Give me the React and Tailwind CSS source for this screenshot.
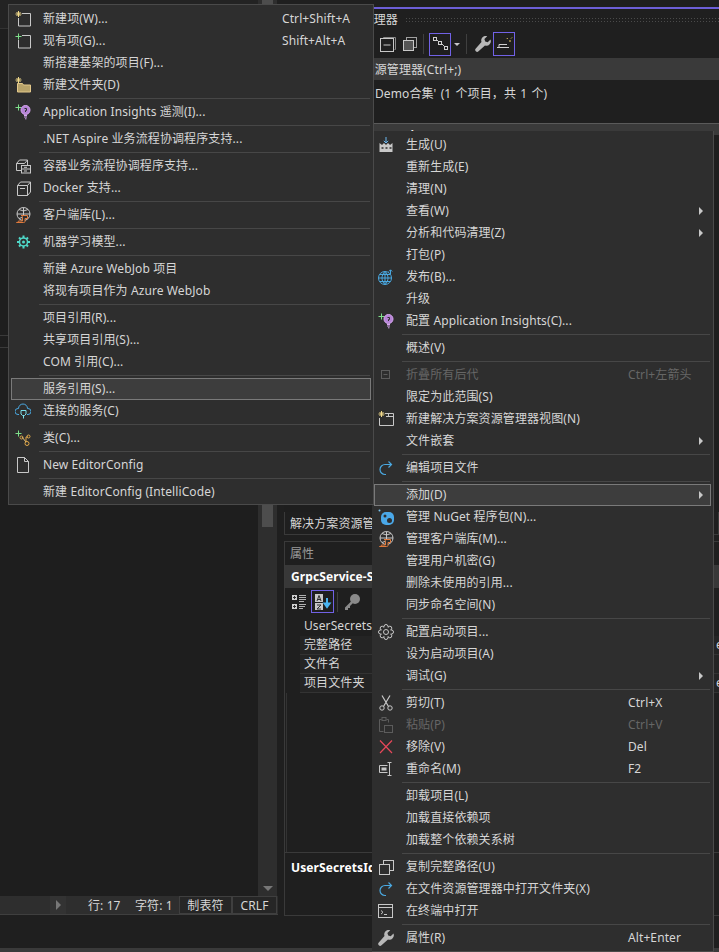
import React from "react";

const G = "#c8c8c8";
const S = ({ children }) => (
  <svg width="16" height="16" viewBox="0 0 16 16" fill="none" strokeWidth="1" className="block shrink-0">{children}</svg>
);
const Star = ({ x = 3, y = 3 }) => (
  <g stroke="#f0d98a" strokeWidth="1">
    <path d={`M${x} ${y - 3}v6M${x - 3} ${y}h6M${x - 2} ${y - 2}l4 4M${x + 2} ${y - 2}l-4 4`} />
  </g>
);
const Plus = ({ x = 3, y = 3, c = "#7ee08a" }) => <path d={`M${x} ${y - 3}v6M${x - 3} ${y}h6`} stroke={c} />;

const icons = {
  newItem: <S><path d="M7 2.500h8.500v12.500H3.500V7" stroke={G} /><Star x={3.5} y={3} /></S>,
  addItem: <S><path d="M7 2.500h8.500v12.500H3.500V7" stroke={G} /><Plus x={3.5} y={3.5} /></S>,
  folder: <S><path d="M2.500 6.500h5l1 1.500h7v7h-13z" fill="#b8a36a" stroke="#e3c88a" /><Star x={3.5} y={3} /></S>,
  insights: <S><Plus x={3.5} y={3.500} /><circle cx="10.500" cy="6" r="4.500" fill="#b583d6" stroke="#d7a6f0" /><path d="M9 11.500h3M9 13h3M10 14.800h1.500" stroke="#d7a6f0" /><path d="M9.500 4.500h2v2h-1v1.500" stroke="#2e2e2e" /></S>,
  container: <S><path d="M1.500 5.500l3-3.500h8l-3 3.500zM1.500 5.500v7h8M12.500 2v5" stroke={G} /><rect x="6.500" y="7.500" width="9" height="7.500" fill="#2e2e2e" stroke={G} /><path d="M6.500 11h9M9 9.300h3M9 13h3" stroke={G} /></S>,
  docker: <S><path d="M2.500 5.500l3-3.500h10v10l-3 3.500h-10zM2.500 5.500h10v10M12.500 5.500l3-3.500M5 8.500h5" stroke={G} /></S>,
  client: <S><circle cx="8.500" cy="7" r="6.500" stroke={G} /><path d="M2 7h13M8.500 .5v13M4 2.500q4.500 3 9 0M4 11.500q4.500-3 9 0" stroke={G} /><path d="M6 8.500h6.500v3H10v3c0 1-1 1-1.500 1H1.500c1 0 2-.5 2-1.500h4v-3.500c0-1-.5-2-1.500-2z" fill="#2e2e2e" stroke="#e07a3c" /></S>,
  ml: <S><g stroke="#4fd8c8" strokeWidth="2"><path d="M8.500 1.500v13M2 8h13M4 3.500l9 9M13 3.500l-9 9" /></g><circle cx="8.500" cy="8" r="4" fill="#2e2e2e" stroke="#4fd8c8" strokeWidth="1.500" /><circle cx="8.500" cy="8" r="1.500" fill="#4fd8c8" /></S>,
  cloud: <S><path d="M4 11.500H3a2.500 2.500 0 010-6h.5a4.500 4.500 0 019 0h.500a2.500 2.500 0 010 6h-1" stroke="#4aa8e0" /><path d="M6 7.500h5v3.500l-1.500 1.500h-2l-1.500-1.500zM8.500 12.500v3" stroke="#7de0ea" /></S>,
  klass: <S><Plus x={3.5} y={3.5} /><path d="M7 7l4 5" stroke="#e0c080" /><circle cx="6.500" cy="7.500" r="1.500" stroke="#e0a84a" /><circle cx="13.500" cy="6.500" r="1.500" stroke="#e0a84a" /><circle cx="12" cy="13.500" r="2" stroke="#e0a84a" /><path d="M11 12v-5h2" stroke="#e0a84a" /></S>,
  file: <S><path d="M2.500 .5h7l4 4v11h-11zM9.500 .5v4h4" stroke={G} /></S>,
  build: <S><path d="M8 0v6M5.800 3.800L8 6l2.200-2.200" stroke="#6ab8f0" /><path d="M1.500 6l2.500 2 2-2 2 2 2-2 2 2 2.500-2v9h-13z" fill="#c8c8c8" /><path d="M3.500 11h2M7.500 11h2M11.500 11h2" stroke="#2e2e2e" strokeWidth="1.500" /></S>,
  publish: <S><circle cx="7" cy="9" r="6.500" stroke="#4aa8e0" /><path d="M.5 9h13M7 2.500v13M1.800 5.500h10.400M1.800 12.500h10.400M7 2.500c-4 3.500-4 9.500 0 13M7 2.500c4 3.500 4 9.500 0 13" stroke="#4aa8e0" /><path d="M12.500 5V1M10.800 2.500l1.700-1.700 1.700 1.700" stroke="#4aa8e0" /></S>,
  view: <S><path d="M7 2.500h8.500v12H1.500V7M8 5.500h7.500M10.500 2.500v3" stroke={G} /><Star x={3.5} y={3} /></S>,
  redo: <S><path d="M13.500 4.500H7a5 5 0 000 10h1M10.500 1.500l3 3-3 3" stroke="#4aa8e0" strokeWidth="1.200" /></S>,
  nuget: <S><circle cx="1.500" cy="1.500" r="1" fill="#7cc4f0" /><rect x="3" y="3" width="13" height="13" rx="5" fill="#4aa8e8" /><circle cx="7" cy="7" r="1.500" fill="#2e2e2e" /><circle cx="11.500" cy="11.500" r="2.500" fill="#2e2e2e" /></S>,
  gear: <S><g stroke={G}><circle cx="8" cy="2.500" r="2" /><circle cx="8" cy="13.500" r="2" /><circle cx="2.500" cy="8" r="2" /><circle cx="13.500" cy="8" r="2" /><circle cx="4.200" cy="4.200" r="2" /><circle cx="11.800" cy="4.200" r="2" /><circle cx="4.200" cy="11.800" r="2" /><circle cx="11.800" cy="11.800" r="2" /></g><circle cx="8" cy="8" r="5" fill="#2e2e2e" /><circle cx="8" cy="8" r="2.500" stroke={G} /></S>,
  cut: <S><path d="M4 .5l6.500 11M12 .5L5.500 11.500" stroke={G} strokeWidth="1.200" /><circle cx="4" cy="13" r="2.200" stroke={G} /><circle cx="12" cy="13" r="2.200" stroke={G} /></S>,
  paste: <S><path d="M5.500 14.500h-4v-12h2M8.500 2.500h2v3" stroke="#5c5c5c" /><rect x="4" y=".5" width="4" height="3" stroke="#5c5c5c" /><rect x="6.500" y="8.500" width="8" height="7" stroke="#5c5c5c" /></S>,
  del: <S><path d="M2 1.500l12 12.500M14 1.500L2 14" stroke="#e8485a" strokeWidth="1.200" /></S>,
  rename: <S><path d="M9.500 4.500h-8v7h8" stroke={G} /><rect x="3.500" y="6.500" width="5" height="3" fill={G} /><path d="M11.500 2v12M9.500 1.500h4M9.500 14.500h4" stroke={G} /></S>,
  copy: <S><rect x="5.500" y="1.500" width="10" height="10" stroke={G} /><rect x="1.500" y="5.500" width="10" height="10" fill="#2e2e2e" stroke={G} /></S>,
  term: <S><rect x=".5" y="1.500" width="14" height="13" stroke={G} /><path d="M.5 4.500h14" stroke={G} /><path d="M3 7.500l2 1.800-2 1.800M6 11.500h3" stroke={G} /></S>,
  wrench: <S><path d="M15.500 3.500l-2.800 2.800-2.500-.8-.8-2.500L12.200.2A4.500 4.500 0 006.500 6L.8 12.500a1.800 1.800 0 002.700 2.700L10 9.500a4.500 4.500 0 005.500-6z" fill="#b8b8b8" /></S>,
  collapseSm: <S><rect x="3.500" y="3.500" width="8" height="8" stroke="#5c5c5c" /><path d="M5.500 7.500h4" stroke="#5c5c5c" /></S>,
};

const leftItems = [
  { t: "新建项(W)...", s: "Ctrl+Shift+A", i: "newItem" },
  { t: "现有项(G)...", s: "Shift+Alt+A", i: "addItem" },
  { t: "新搭建基架的项目(F)..." },
  { t: "新建文件夹(D)", i: "folder" },
  0,
  { t: "Application Insights 遥测(I)...", i: "insights" },
  0,
  { t: ".NET Aspire 业务流程协调程序支持..." },
  0,
  { t: "容器业务流程协调程序支持...", i: "container" },
  { t: "Docker 支持...", i: "docker" },
  0,
  { t: "客户端库(L)...", i: "client" },
  0,
  { t: "机器学习模型...", i: "ml" },
  0,
  { t: "新建 Azure WebJob 项目" },
  { t: "将现有项目作为 Azure WebJob" },
  0,
  { t: "项目引用(R)..." },
  { t: "共享项目引用(S)..." },
  { t: "COM 引用(C)..." },
  0,
  { t: "服务引用(S)...", hi: true },
  { t: "连接的服务(C)", i: "cloud" },
  0,
  { t: "类(C)...", i: "klass" },
  0,
  { t: "New EditorConfig", i: "file" },
  0,
  { t: "新建 EditorConfig (IntelliCode)" },
];

const rightItems = [
  { t: "生成(U)", i: "build" },
  { t: "重新生成(E)" },
  { t: "清理(N)" },
  { t: "查看(W)", a: 1 },
  { t: "分析和代码清理(Z)", a: 1 },
  { t: "打包(P)" },
  { t: "发布(B)...", i: "publish" },
  { t: "升级" },
  { t: "配置 Application Insights(C)...", i: "insights" },
  0,
  { t: "概述(V)" },
  0,
  { t: "折叠所有后代", s: "Ctrl+左箭头", d: 1, i: "collapseSm" },
  { t: "限定为此范围(S)" },
  { t: "新建解决方案资源管理器视图(N)", i: "view" },
  { t: "文件嵌套", a: 1 },
  0,
  { t: "编辑项目文件", i: "redo" },
  0,
  { t: "添加(D)", a: 1, hi: true },
  { t: "管理 NuGet 程序包(N)...", i: "nuget" },
  { t: "管理客户端库(M)...", i: "client" },
  { t: "管理用户机密(G)" },
  { t: "删除未使用的引用..." },
  { t: "同步命名空间(N)" },
  0,
  { t: "配置启动项目...", i: "gear" },
  { t: "设为启动项目(A)" },
  { t: "调试(G)", a: 1 },
  0,
  { t: "剪切(T)", s: "Ctrl+X", i: "cut" },
  { t: "粘贴(P)", s: "Ctrl+V", d: 1, i: "paste" },
  { t: "移除(V)", s: "Del", i: "del" },
  { t: "重命名(M)", s: "F2", i: "rename" },
  0,
  { t: "卸载项目(L)" },
  { t: "加载直接依赖项" },
  { t: "加载整个依赖关系树" },
  0,
  { t: "复制完整路径(U)", i: "copy" },
  { t: "在文件资源管理器中打开文件夹(X)", i: "redo" },
  { t: "在终端中打开", i: "term" },
  0,
  { t: "属性(R)", s: "Alt+Enter", i: "wrench" },
];

function Menu({ items, labelClass, outer }) {
  return (
    <div className={outer}>
      {items.map((it, k) =>
        it === 0 ? (
          <div key={k} className="h-[5px] flex items-center ml-[28px] mr-[1px]">
            <div className="h-px w-full bg-[#474747]" />
          </div>
        ) : (
          <div
            key={k}
            className={
              "h-[22px] flex items-center pl-[4px] pr-[7px] whitespace-nowrap border " +
              (it.hi ? "bg-[#3d3d3d] border-[#7a7a7a]" : "border-transparent") +
              (it.d ? " text-[#666666]" : " text-[#d6d6d6]")
            }
          >
            <span className="w-[15px] h-[16px] -ml-px mr-[13px] shrink-0">{it.i ? icons[it.i] : null}</span>
            <span className={labelClass}>{it.t}</span>
            {it.s ? <span>{it.s}</span> : null}
            {it.a ? (
              <span className="ml-auto w-0 h-0 border-y-[4px] border-y-transparent border-l-[4px] border-l-[#c8c8c8]" />
            ) : null}
          </div>
        )
      )}
    </div>
  );
}

function EditorAndStatus() {
  return (
    <div className="w-[278px] shrink-0 flex flex-col h-full">
      <div className="flex-1 flex min-h-0">
        <div className="w-[258px] bg-[#1e1e1e] flex flex-col">
          <div className="h-[29px] bg-[#232323] border-b border-[#333333]" />
          <div className="h-[306px]" />
          <div className="h-[13px] border-y border-[#3a3a3a]" />
        </div>
        <div className="w-[19px] bg-[#2e2e2e] flex flex-col items-center">
          <div className="h-[527px] w-[11px] bg-[#4d4d4d]" />
          <div className="flex-1" />
          <div className="mb-[5px] w-0 h-0 border-x-[5px] border-x-transparent border-t-[5px] border-t-[#777777]" />
        </div>
      </div>
      <div className="h-[19px] bg-[#2e2e2e] border-b border-[#3f3f3f] flex items-center text-[12px] text-[#d6d6d6] whitespace-nowrap w-[278px]">
        <div className="w-[50px]" />
        <div className="w-[16px] h-full bg-[#333333] flex items-center justify-center">
          <span className="w-0 h-0 border-y-[5px] border-y-transparent border-l-[5px] border-l-[#777777]" />
        </div>
        <span className="ml-[22px] w-[47px] pt-[1px]">行: 17</span>
        <span className="w-[44px] pt-[1px]">字符: 1</span>
        <span className="h-full w-[53px] border border-[#3f3f3f] bg-[#262626] flex items-center justify-center pt-[1px]">制表符</span>
        <span className="h-full w-[45px] border border-[#3f3f3f] bg-[#262626] flex items-center justify-center pt-[1px]">CRLF</span>
      </div>
      <div className="h-[33px]" />
    </div>
  );
}

function Properties() {
  const rows = [
    ["完整路径", "e"],
    ["文件名", ""],
    ["项目文件夹", "e"],
  ];
  return (
    <div className="h-[375px] w-[445px] border border-[#3a3a3a] flex flex-col text-[12px] text-[#d6d6d6] whitespace-nowrap">
      <div className="h-[23px] flex items-center pl-[5px] text-[#9a9a9a]">属性</div>
      <div className="h-[23px] bg-[#383838] flex items-center pl-[6px] font-bold text-white">GrpcService-SDemo</div>
      <div className="h-[27px] flex items-center pl-[7px]">
        <svg width="14" height="14" viewBox="0 0 14 14" className="block">
          <rect x="0" y="0" width="5" height="5" fill="#d0d0d0" />
          <rect x="0" y="9" width="5" height="5" fill="#d0d0d0" />
          <path d="M1 2.500h3M2.500 1v3M1 11.500h3M2.500 10v3" stroke="#2e2e2e" />
          <path d="M7 .5h7M7 2.500h7M7 4.500h7M7 6.500h5M7 9.500h7M7 11.500h6M7 13.500h4" stroke="#b0b0b0" />
        </svg>
        <span className="ml-[5px] w-[23px] h-[23px] border border-[#7162e6] flex items-center justify-center">
          <svg width="18" height="18" viewBox="0 0 18 18" className="block">
            <rect x="1" y="1" width="8" height="8" fill="#c8c8c8" />
            <rect x="1" y="10" width="8" height="7" fill="#c8c8c8" />
            <path d="M3 8l2-5.500L7 8M3.500 6.500h3M3 12h4l-4 4h4" stroke="#2e2e2e" fill="none" />
            <path d="M13 5v9M10.500 10.500l2.500 3.500 2.500-3.500z" stroke="#4ab4f0" strokeWidth="2" fill="#4ab4f0" />
          </svg>
        </span>
        <span className="ml-[3px] w-px h-[20px] bg-[#3f3f3f]" />
        <svg width="18" height="18" viewBox="0 0 18 18" className="block ml-[5px]">
          <circle cx="12" cy="6" r="5" fill="#8a8a8a" />
          <path d="M8.500 8L2 14.500V17h3v-2h2v-2l3-3z" fill="#8a8a8a" />
        </svg>
      </div>
      <div className="h-[21px] flex items-center pl-[19px] pt-[1px] text-[#d6d6d6]">
        <span>UserSecrets</span>
      </div>
      {rows.map((r) => (
        <div key={r[0]} className="h-[19px] ml-[15px] pl-[4px] bg-[#242424] border-b border-[#333333] flex items-center">
          <span className="w-[412px]">{r[0]}</span>
          <span>{r[1]}</span>
        </div>
      ))}
      <div className="flex-1 border-l border-[#333333] ml-px" />
      <div className="h-[63px] border-t border-[#3a3a3a] pl-[6px] pt-[6px] font-bold text-white">UserSecretsId</div>
    </div>
  );
}

function RightColumn() {
  return (
    <div className="flex-1 flex flex-col h-full pl-[6px] pt-[7px] text-[12px] text-[#d6d6d6] whitespace-nowrap min-w-0">
      <div className="h-[2px] bg-[#6d5fd8] -ml-[6px] shrink-0" />
      <div className="h-[21px] flex items-center pl-[5px] shrink-0">
        <span>解决方案资源管理器</span>
        <div className="ml-[7px] flex-1 h-[6px] bg-[radial-gradient(#4a4a4a_1px,transparent_1px)] bg-[length:3px_3px]" />
      </div>
      <div className="h-[28px] flex items-center pl-[96px] shrink-0">
        <svg width="16" height="16" viewBox="0 0 16 16" className="block">
          <path d="M3.500 2.500v-1h12v12h-1" stroke="#8a8a8a" fill="none" />
          <rect x="0.500" y="2.500" width="13" height="13" stroke="#c8c8c8" fill="#1f1f1f" />
          <path d="M3.500 9h7" stroke="#c8c8c8" />
        </svg>
        <svg width="16" height="16" viewBox="0 0 16 16" className="block ml-[6px]">
          <rect x="4.500" y="1.500" width="10" height="10" stroke="#a0a0a0" fill="none" />
          <rect x="1.500" y="4.500" width="10" height="10" stroke="#c8c8c8" fill="#555555" />
        </svg>
        <span className="ml-[5px] w-px h-[20px] bg-[#3f3f3f]" />
        <span className="ml-[5px] w-[22px] h-[23px] border border-[#7162e6] flex items-center justify-center">
          <svg width="17" height="16" viewBox="0 0 17 16" className="block">
            <g stroke="#d0d0d0" fill="none">
              <rect x="1.500" y="1.500" width="3" height="3" />
              <rect x="6.500" y="5.500" width="3" height="3" />
              <rect x="12.500" y="10.500" width="3" height="3" />
              <path d="M4.500 3.500l2 2M9.500 7.500l3 3" />
            </g>
          </svg>
        </span>
        <span className="ml-[3px] w-0 h-0 border-x-[3px] border-x-transparent border-t-[3px] border-t-[#c8c8c8]" />
        <span className="ml-[6px] w-px h-[20px] bg-[#3f3f3f]" />
        <span className="ml-[8px]">{icons.wrench}</span>
        <span className="ml-[2px] w-[22px] h-[24px] border border-[#7162e6] flex items-center justify-center">
          <svg width="17" height="16" viewBox="0 0 17 16" className="block">
            <path d="M1 11.500h12M3 11.500v-3h8" stroke="#d0d0d0" fill="none" />
            <path d="M13 5h2M15 2.500l1-1M11.500 3l-.5-1" stroke="#e8c860" fill="none" />
          </svg>
        </span>
      </div>
      <div className="h-[22px] bg-[#3a3a3a] flex items-center pl-[6px] pt-[1px] shrink-0">搜索解决方案资源管理器(Ctrl+;)</div>
      <div className="h-[43px] pl-[91px] pt-[3px] shrink-0 leading-[22px] [word-spacing:1px]">Demo合集' (1 个项目，共 1 个)</div>
      <div className="h-[12px] border-t border-[#5a5a5a] bg-[#3a3a3a] shrink-0 pl-[100px] font-bold text-white leading-[24px] overflow-hidden">Service-S</div>
      <div className="flex-1 bg-[#1e1e1e]" />
      <div className="h-[23px] border-x border-b border-[#3a3a3a] flex items-center pl-[5px] pt-[1px] shrink-0">解决方案资源管理器</div>
      <div className="h-[6px] shrink-0" />
      <div className="shrink-0"><Properties /></div>
      <div className="h-[32px] shrink-0" />
    </div>
  );
}

export default function App() {
  return (
    <div className="relative w-[719px] h-[952px] overflow-hidden bg-[#1f1f1f] tracking-[0.1px] font-['Noto_Sans','Noto_Sans_CJK_SC',sans-serif] flex flex-col">
      <div className="h-[948px] flex shrink-0">
        <EditorAndStatus />
        <RightColumn />
      </div>
      <div className="h-[4px] bg-[#3a3a3a] shrink-0" />
      <Menu
        items={rightItems}
        labelClass="w-[222px] shrink-0"
        outer="absolute left-[372px] top-[131px] w-[342px] bg-[#2e2e2e] border-r border-b border-[#4a4a4a] px-[2px] pt-[3px] pb-[2px] text-[12px] leading-none"
      />
      <Menu
        items={leftItems}
        labelClass="w-[239px] shrink-0"
        outer="absolute left-[8px] top-[4px] w-[366px] bg-[#2e2e2e] border border-[#4a4a4a] px-[2px] pt-[3px] pb-[1px] text-[12px] leading-none"
      />
    </div>
  );
}
